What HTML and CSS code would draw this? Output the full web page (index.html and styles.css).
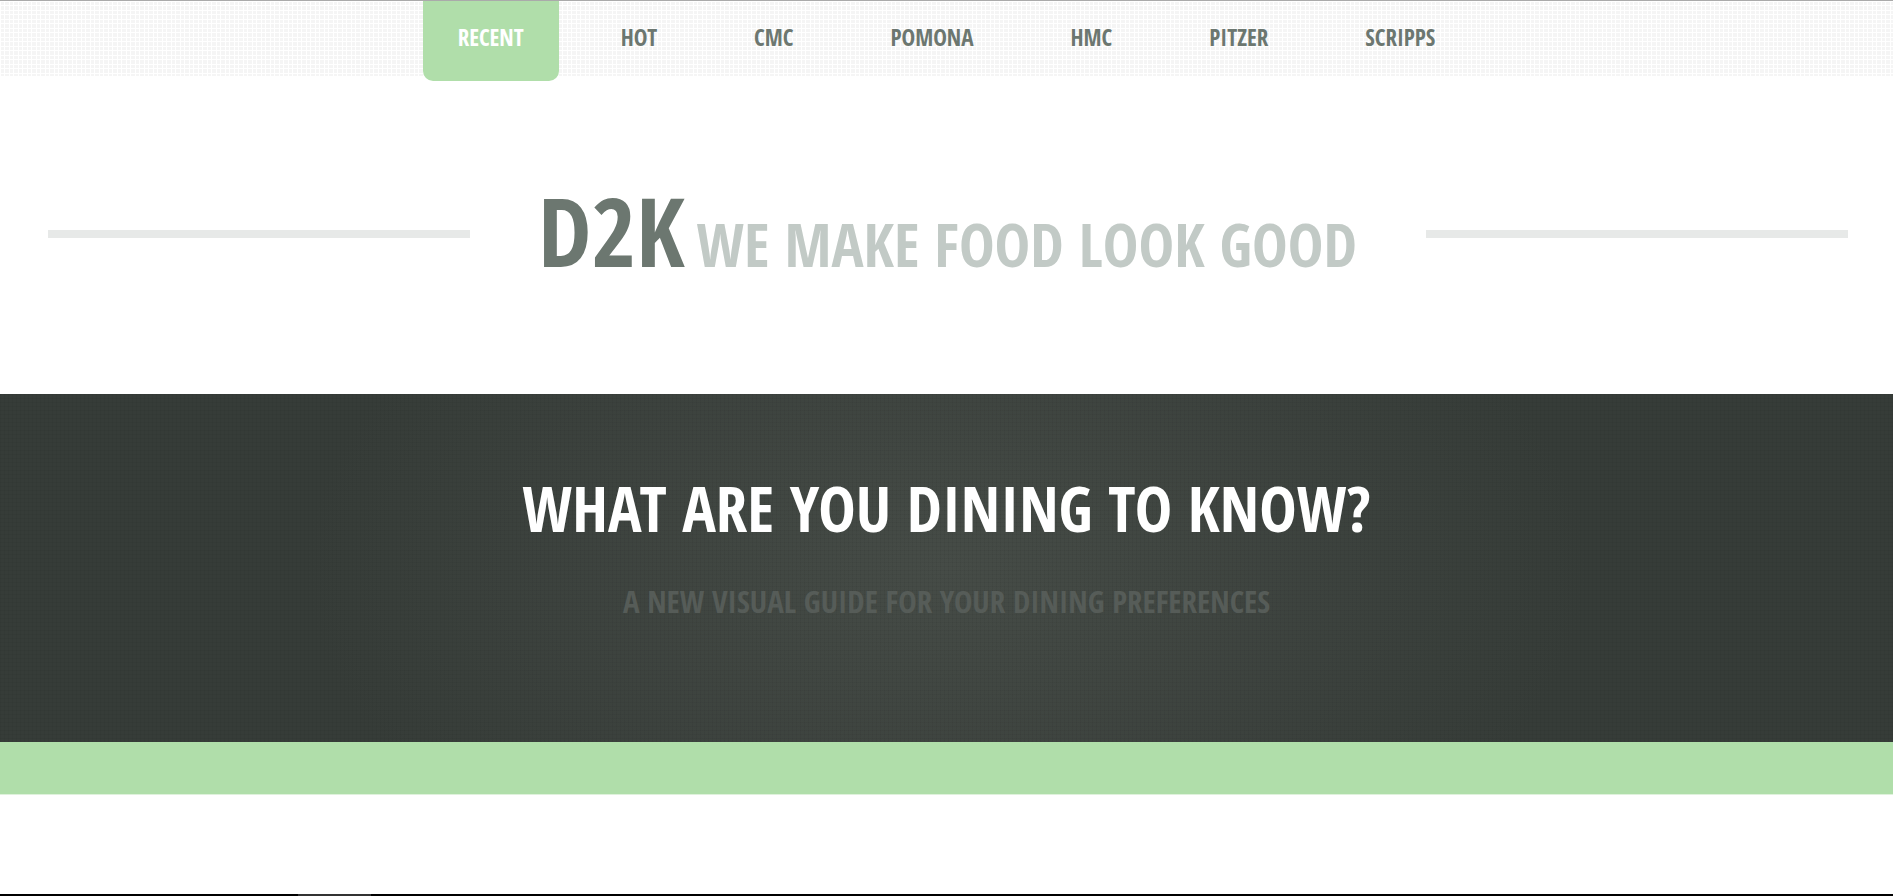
FILE: index.html
```html
<!DOCTYPE html>
<html lang="en">
<head>
    <meta charset="utf-8">
    <title>D2K</title>
    <link rel="stylesheet" href="styles.css">
</head>
<body>
    <nav>
        <ul class="menu">
            <li><a class="active" href="#recent">Recent</a></li>
            <li><a href="#hot">Hot</a></li>
            <li><a href="#cmc">CMC</a></li>
            <li><a href="#pomona">Pomona</a></li>
            <li><a href="#hmc">HMC</a></li>
            <li><a href="#pitzer">Pitzer</a></li>
            <li><a href="#scripps">Scripps</a></li>
        </ul>
    </nav>

    <header>
        <h1>D2K <small>We make food look good</small></h1>
    </header>

    <section class="hero">
        <h2>What are you dining to know?</h2>
        <p>A new visual guide for your dining preferences</p>
    </section>
    <div class="bar"></div>

    <div class="gallery">
        <div class="photo"></div>
    </div>
</body>
</html>
```
FILE: styles.css
```css
*{
    box-sizing: border-box;
}
body{
    margin: 0;
    min-height: 100vh;
    display: flex;
    flex-direction: column;
    background-color: #fff;
    color: #6c7770;
    font-family: "Open Sans Condensed", "Liberation Sans Narrow", "Open Sans", sans-serif;
    font-weight: 700;
    text-transform: uppercase;
}
/*=======Menu=======*/
nav{
    height: 76px;
    border-top: 1px solid #aaa;
    background-color: #f5f5f5;
    background-image:
        repeating-linear-gradient(90deg, #fff 0 1px, transparent 1px 4px, #fff 4px 5px, transparent 5px 9px),
        repeating-linear-gradient(#fff 0 1px, transparent 1px 4px, #fff 4px 5px, transparent 5px 9px);
}
.menu{
    display: flex;
    justify-content: center;
    gap: 27px;
    margin: 0;
    padding: 0;
    list-style: none;
}
.menu a{
    display: block;
    height: 80px;
    padding: 0 35px;
    border-radius: 0 0 10px 10px;
    color: #6c7770;
    font-size: 23px;
    line-height: 72px;
    text-decoration: none;
}
.menu .active{
    background-color: #b0deaa;
    color: #fff;
}
/*=======Title=======*/
header{
    height: 318px;
    padding: 0 45px 2px 48px;
    display: flex;
    align-items: center;
}
header::before,
header::after{
    content: "";
    flex: 1;
    height: 8px;
    background-color: #e7e9e8;
}
h1{
    margin: 0 69px 0 68px;
    padding-top: 6px;
    font-size: 96px;
    line-height: 120px;
}
h1 small{
    margin-left: -12px;
    color: #c2cac6;
    font-size: 60px;
}
/*=======Hero=======*/
.hero{
    height: 348px;
    padding-top: 70px;
    text-align: center;
    background:
        repeating-linear-gradient(90deg, rgba(0,0,0,.04) 0 1px, transparent 1px 4px),
        repeating-linear-gradient(rgba(0,0,0,.04) 0 1px, transparent 1px 4px),
        radial-gradient(ellipse 640px 380px at center, #464c47, #363c38);
}
.hero h2{
    margin: 0;
    color: #fff;
    font-size: 63px;
    line-height: 88px;
}
.hero p{
    margin: 27px 0 0;
    color: #565c58;
    font-size: 31px;
    line-height: 44px;
}
.bar{
    height: 53px;
    border-bottom: 1px solid #dff2dc;
    background-color: #b0deaa;
}
/*=======Gallery=======*/
.gallery{
    flex: 1;
    display: flex;
    margin-top: 99px;
    padding-left: 298px;
    background-color: #000;
}
.photo{
    width: 73px;
    background-color: #333;
}
```
